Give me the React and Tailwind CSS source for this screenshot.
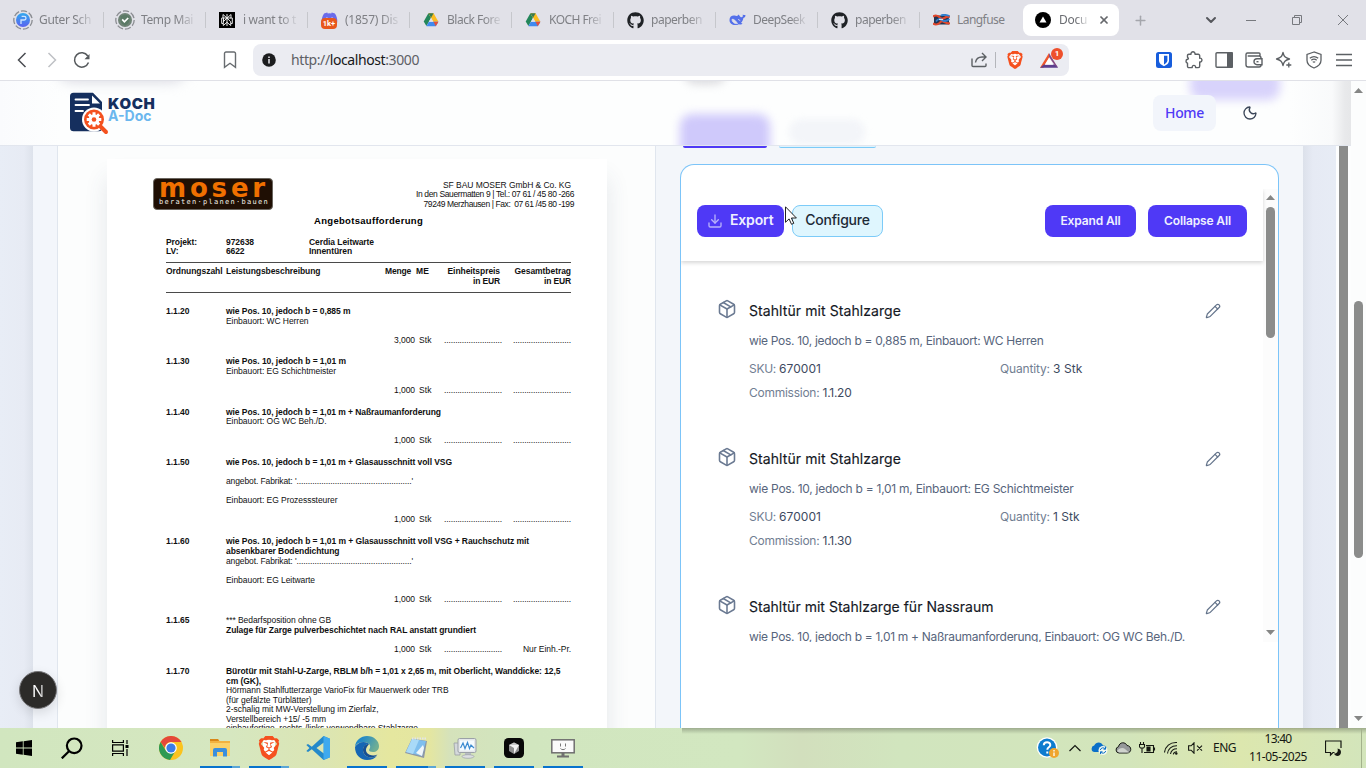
import React, { useLayoutEffect, useRef } from "react";
import { Moon, Package, Pencil, Download, ChevronDown, X, Plus } from "lucide-react";
import { FaGithub, FaDiscord } from "react-icons/fa";
import { SiBrave } from "react-icons/si";

/* Single-line text that spreads its letters over a given width. */
function Fit({ w, className = "", children }) {
  const ref = useRef(null);
  useLayoutEffect(() => {
    const el = ref.current;
    el.style.letterSpacing = "0px";
    const natural = el.getBoundingClientRect().width;
    const n = el.textContent.length;
    el.style.letterSpacing = (w - natural) / n + "px";
  }, [w, children]);
  return (
    <span ref={ref} className={"inline-block shrink-0 whitespace-pre " + className}>
      {children}
    </span>
  );
}

/* ---------- tab strip ---------- */

const DriveIcon = () => (
  <svg width="16" height="16" viewBox="0 0 16 16">
    <path d="M5.4 1.3 8.1 5.8 3.4 14 .7 9.5z" fill="#23865a" />
    <path d="M5.4 1.3h5.2L15.4 9.8H10.1z" fill="#fbbc1f" />
    <path d="M5.4 1.3h5.2L8.1 5.8z" fill="#3a7a50" />
    <path d="M3.4 14.2 5.9 9.8h9.5l-2.6 4.4z" fill="#3f8af0" />
    <path d="m12.8 14.2 2.6-4.4h-4.9z" fill="#e5503c" />
    <path d="M8.1 5.8 5.9 9.8h4.5z" fill="#e1e1e8" />
  </svg>
);

const DashedRing = ({ children }) => (
  <svg width="20" height="20" viewBox="0 0 20 20">
    <circle cx="10" cy="10" r="9.2" fill="none" stroke="#8b8d92" strokeWidth="1.3" strokeDasharray="6.2 2" />
    {children}
  </svg>
);

const ParkIcon = () => (
  <DashedRing>
    <defs>
      <linearGradient id="park" x1="0" y1="0" x2="0" y2="1">
        <stop offset="0" stopColor="#32a9ee" />
        <stop offset="1" stopColor="#5b63f0" />
      </linearGradient>
    </defs>
    <circle cx="10" cy="10" r="7" fill="url(#park)" />
    <path d="M8 14V10h3.2a1.8 1.8 0 1 0 0-3.6H8.6" fill="none" stroke="#cfe6ff" strokeWidth="1.3" />
  </DashedRing>
);

const TempMailIcon = () => (
  <DashedRing>
    <circle cx="10" cy="10" r="7" fill="#6f8376" />
    <path d="M5.5 6 10 4.5 14.5 6v4c0 3-2.5 4.8-4.5 5.7C8 14.800 5.500 13 5.500 10z" fill="#5b7a66" />
    <path d="m7.200 9.400 2.200 2.400 3.800-3.800" fill="none" stroke="#fff" strokeWidth="1.700" />
  </DashedRing>
);

const PerplexityIcon = () => (
  <svg width="16" height="16" viewBox="0 0 16 16">
    <rect width="16" height="16" fill="#000" />
    <g fill="none" stroke="#e9e9e9" strokeWidth="1">
      <path d="M8 2v12M4 2.500 8 6l4-3.500V6H4zM4.500 10V6H2.700v5.500h1.600V13.500L8 10.300l3.700 3.200v-2h1.600V6h-1.800" />
      <path d="M8 6 4.300 9.800v1.700M8 6l3.700 3.800v1.700" />
    </g>
  </svg>
);

const DiscordIcon = () => (
  <span className="flex size-4 flex-col items-center">
    <FaDiscord className="-mt-0.5 size-[17px] shrink-0 text-[#6a6bea]" />
    <span className="-mt-[9px] flex h-[11px] w-4 shrink-0 items-center justify-center rounded-[4px] bg-[#e8571c] font-['Roboto'] text-[7.5px] leading-none font-bold text-white">
      1k+
    </span>
  </span>
);

const WhaleIcon = () => (
  <svg width="17" height="14" viewBox="0 0 17 14">
    <path
      d="M.500 7C.500 3.800 3 2.300 5.500 2.600c1.200.200 2 .700 2.800.3.800-.5.200-1.200 1.200-1.200 1 .1.900 1.600 2 2.200.900.500 2 .300 2.300-.6.200-.8-.3-1.300.1-1.900.600.800 1.600.8 2.500.5.200 1.500-.5 2.600-2 3-.4 2.200-1.200 3.700-2.400 4.900.5.500 1.200.5 1.500 1-.700.900-2.500.900-3.600.4C5.800 13.200.500 11.800.500 7z"
      fill="#5470ea"
    />
    <path d="M3 6.300c2-.4 3.700 1.500 5.500 4.200C5.500 11.200 3 9 3 6.300zM9 6.300l2.300 1.400" fill="#e1e1e8" stroke="#e1e1e8" strokeWidth=".8" />
  </svg>
);

const LangfuseIcon = () => (
  <svg width="17" height="12" viewBox="0 0 17 12">
    <path d="M1 1.500h15v9H1z" fill="#25344f" />
    <path d="M0 2.500c4-2.500 6 0 8 2s5-3.500 9-1.500M0 9.500c4 2.500 6 0 8-2s5 3.500 9 1.500" fill="none" stroke="#e2482d" strokeWidth="2.200" />
    <path d="M8 1.500c3-1.500 6-.5 8.500.5M3 7.500c2-3 4-3 6-1.500s5 1 7.500-1" fill="none" stroke="#2f7fd0" strokeWidth="1.800" />
    <path d="M6 5.500h4" stroke="#d9dde5" strokeWidth="1.200" />
  </svg>
);

const Github = () => <FaGithub className="size-[17px] text-[#1f2226]" />;

const TABS = [
  { icon: ParkIcon, text: "Guter Sch", w: 52 },
  { icon: TempMailIcon, text: "Temp Mai", w: 52 },
  { icon: PerplexityIcon, text: "i want to t", w: 53 },
  { icon: DiscordIcon, text: "(1857) Dis", w: 53 },
  { icon: DriveIcon, text: "Black Fore", w: 53 },
  { icon: DriveIcon, text: "KOCH Frei", w: 52 },
  { icon: Github, text: "paperben", w: 51 },
  { icon: WhaleIcon, text: "DeepSeek", w: 52 },
  { icon: Github, text: "paperben", w: 51 },
  { icon: LangfuseIcon, text: "Langfuse", w: 47.5, full: true },
];

function TabStrip() {
  return (
    <div className="flex h-10 shrink-0 items-center bg-[#e1e1e8] pl-0.5 font-['Noto_Sans'] text-[12px] text-[#7f8085]">
      {TABS.map((t, i) => (
        <div key={i} className="flex h-10 w-[102px] shrink-0 items-center">
          <div className="ml-[11px] flex w-5 justify-center">
            <t.icon />
          </div>
          <div
            className={
              "ml-[6px] w-[54px] overflow-hidden whitespace-nowrap " +
              (t.full ? "" : "[mask-image:linear-gradient(to_right,#000_68%,transparent_104%)]")
            }
          >
            <Fit w={t.w}>{t.text}</Fit>
          </div>
          {!t.full && <div className="ml-auto h-4 w-px bg-[#c6c7cc]" />}
        </div>
      ))}
      <div className="ml-[1px] flex h-8 w-24 shrink-0 items-center rounded-[8px] bg-white">
        <svg className="ml-3" width="16" height="16" viewBox="0 0 16 16">
          <circle cx="8" cy="8" r="8" fill="#000" />
          <path d="M8 4.500 11.500 10.600h-7z" fill="#fff" />
        </svg>
        <div className="ml-2 w-[28px] overflow-hidden whitespace-nowrap text-[#6b6d72] [mask-image:linear-gradient(to_right,#000_60%,transparent_110%)]">
          <Fit w={28}>Docu</Fit>
        </div>
        <X className="ml-[11px] size-3 text-[#66686c]" strokeWidth={3.500} />
      </div>
      <Plus className="ml-[14px] size-[15px] text-[#a5a6ac]" strokeWidth={2.400} />
      <ChevronDown className="ml-[55px] size-[16px] text-[#55575c]" strokeWidth={3} />
      <svg className="ml-[27px]" width="10" height="10" viewBox="0 0 10 10">
        <path d="M0 5.500h10" stroke="#77797e" />
      </svg>
      <svg className="ml-[36px]" width="10" height="10" viewBox="0 0 10 10" fill="none" stroke="#77797e">
        <path d="M.500 2.500h7v7h-7zM2.500 2.500v-2h7v7h-2" />
      </svg>
      <svg className="ml-[36px]" width="10" height="10" viewBox="0 0 10 10" fill="none" stroke="#77797e">
        <path d="m0 0 10 10M10 0 0 10" />
      </svg>
    </div>
  );
}

/* ---------- address bar ---------- */

const Cell = ({ children }) => <div className="flex w-[30px] items-center justify-center">{children}</div>;

const BraveMark = ({ big }) => (
  <span className={"relative flex items-center justify-center " + (big ? "size-6" : "size-[18px]")}>
    <span className={"absolute bg-white " + (big ? "h-4 w-3" : "h-3 w-2")} />
    <SiBrave className={"relative text-[#f5501e] " + (big ? "size-6" : "size-[18px]")} />
  </span>
);

function AddressBar() {
  return (
    <div className="flex h-10 shrink-0 items-center bg-white text-[#55595c]">
      <svg className="ml-[16px]" width="12" height="16" viewBox="0 0 12 16" fill="none" stroke="#4a4d52" strokeWidth="1.500">
        <path d="M9.500 1 2.500 8l7 7" />
      </svg>
      <svg className="ml-[18px]" width="12" height="16" viewBox="0 0 12 16" fill="none" stroke="#bfc1c5" strokeWidth="1.500">
        <path d="m2.500 1 7 7-7 7" />
      </svg>
      <svg className="ml-[15px]" width="18" height="18" viewBox="0 0 18 18" fill="none" stroke="#55595c" strokeWidth="1.500">
        <path d="M15.500 11.500A7.200 7.200 0 1 1 14.800 5" />
        <path d="M16.500 3v5.200h-5z" fill="#55595c" stroke="none" />
      </svg>
      <svg className="ml-[132px]" width="14" height="18" viewBox="0 0 14 18" fill="none" stroke="#686c70" strokeWidth="1.400">
        <path d="M1.500 2.500a1.500 1.500 0 0 1 1.500-1.500h8a1.500 1.500 0 0 1 1.500 1.500v13.800L7 12.300l-5.500 4z" />
      </svg>
      <div className="ml-4 flex h-8 w-[816px] items-center rounded-[8px] bg-[#ebecf2]">
        <svg className="ml-[9px]" width="14" height="14" viewBox="0 0 14 14">
          <circle cx="7" cy="7" r="6.800" fill="#1c1d1f" />
          <path d="M7 6v4.500M7 3.400V5" stroke="#ebecf2" strokeWidth="1.500" />
        </svg>
        <span className="mb-0.5 ml-[15px] font-['Noto_Sans'] text-[14px] text-[#5d6065]">
          <Fit w={128}>
            http://<span className="text-[#17181a]">localhost</span>:3000
          </Fit>
        </span>
        <svg className="ml-[552px]" width="17" height="16" viewBox="0 0 17 16" fill="none" stroke="#5c6064" strokeWidth="1.400">
          <path d="M1 6.500V13.500a1 1 0 0 0 1 1h12a1 1 0 0 0 1-1V11.500" />
          <path d="M4.500 10.500c.5-3.500 3-5.500 6.500-5.500h3.500M11 1l4 4-4 4" />
        </svg>
        <div className="ml-[7px] h-4 w-px bg-[#b4b6bb]" />
        <div className="ml-[10px]">
          <BraveMark />
        </div>
        <div className="relative ml-[16px] h-[18px] w-[22px] pt-px">
          <svg width="18" height="16" viewBox="0 0 18 16">
            <path d="M9 1 0 15.800h3.500L9 6z" fill="#f0562c" />
            <path d="M0 15.800h18l-2.200-3.300H4z" fill="#5d3f8e" />
            <path d="M9 1 18 15.800l-3.700-3.300L9 5z" fill="#874a82" />
            <path d="M9 5.800 4.700 12.800h8.600z" fill="#fff" />
          </svg>
          <span className="absolute -top-[3px] left-[11px] flex size-3 items-center justify-center rounded-full bg-[#ee4f2b] font-['Roboto'] text-[8px] leading-none font-bold text-white">
            1
          </span>
        </div>
      </div>
      <div className="ml-[80px] flex items-center">
        <Cell>
          <svg width="16" height="16" viewBox="0 0 16 16">
            <rect width="16" height="16" rx="2.500" fill="#175ddc" />
            <path d="M3 2h10v6.500c0 3-3 4.800-5 5.700-2-.9-5-2.700-5-5.700z" fill="#fff" />
            <path d="M8 3.700h3.400v4.800c0 1.800-1.800 3-3.400 3.900z" fill="#175ddc" />
          </svg>
        </Cell>
        <Cell>
          <svg width="18" height="18" viewBox="0 0 18 18" fill="none" stroke="#5c6064" strokeWidth="1.400" strokeLinejoin="round">
            <path d="M2.500 4.500A1.300 1.300 0 0 1 3.800 3.200H6C5.500 0 10.500 0 10 3.200h3.200a1.500 1.500 0 0 1 1.500 1.500v2.500c3-.6 3 4.400 0 3.800V15a1.600 1.600 0 0 1-1.500 1.600h-2.600c.3-3-3.700-3-3.400 0H3.800a1.300 1.300 0 0 1-1.300-1.300v-3.100c-2-.5-2-3.500 0-3.900 1.200-.5 1.200-1.300 0-2z" />
          </svg>
        </Cell>
        <Cell>
          <svg width="18" height="16" viewBox="0 0 18 16">
            <rect x="1" y=".800" width="16" height="14.400" rx="1" fill="none" stroke="#5c6064" strokeWidth="1.400" />
            <path d="M12 0h5a1 1 0 0 1 1 1v14a1 1 0 0 1-1 1h-5z" fill="#5c6064" />
          </svg>
        </Cell>
        <Cell>
          <svg width="18" height="16" viewBox="0 0 18 16" fill="none" stroke="#5c6064" strokeWidth="1.400">
            <path d="M15 4V2a1 1 0 0 0-1-1H2.500A1.500 1.500 0 0 0 1 2.500v10.300A2.200 2.200 0 0 0 3.200 15H14a2 2 0 0 0 2-2V6a2 2 0 0 0-2-2H2.700" />
            <path d="M17 6.700h-5a3 3 0 0 0 0 6h5z" fill="#fff" />
            <path d="M11.500 9.700h2" />
          </svg>
        </Cell>
        <Cell>
          <svg width="18" height="18" viewBox="0 0 18 18" fill="none" stroke="#5c6064" strokeWidth="1.300" strokeLinejoin="round">
            <path d="M8 1.500c1 4 2 5.300 6.500 6.500-4.500 1.200-5.500 2.500-6.500 6.500-1-4-2-5.300-6.500-6.500C6 6.800 7 5.500 8 1.500z" />
            <path d="M13.800 11.500v5M11.300 14h5" />
          </svg>
        </Cell>
        <Cell>
          <svg width="16" height="18" viewBox="0 0 16 18" fill="none" stroke="#5c6064" strokeWidth="1.300">
            <path d="M8 1 1 3.500v5.700C1 13 4.200 15.600 8 17c3.800-1.400 7-4 7-7.800V3.500z" />
            <path d="M3.800 7.300c2.500-2 5.900-2 8.400 0M5.300 9.300c1.600-1.300 3.800-1.300 5.400 0M6.800 11.300c.8-.6 1.600-.6 2.400 0" />
          </svg>
        </Cell>
        <Cell>
          <svg width="16" height="14" viewBox="0 0 16 14" stroke="#5c6064" strokeWidth="1.400">
            <path d="M0 1.500h16M0 7h16M0 12.500h16" />
          </svg>
        </Cell>
      </div>
    </div>
  );
}

/* ---------- page header ---------- */

function PageHeader() {
  return (
    <div className="relative mt-px flex h-[65px] w-[1351px] shrink-0 overflow-hidden border-b border-[#e2e6ee] bg-[linear-gradient(to_right,#fafbfd,#fdfefe_60px,#fdfefe_1290px,#f9fafb_1332px,#e8e9eb_1345px,#e6e7e9)]">
      <div className="absolute -top-[28px] left-[58px] h-7 w-[128px] rounded-full bg-[#d3d4de] blur-[7px]" />
      <div className="absolute -top-[21px] left-[684px] h-6 w-[42px] rounded-full bg-[#d9d9dd] blur-[5px]" />
      <div className="absolute top-[33px] left-[680px] h-[56px] w-[90px] rounded-xl bg-[#cfc9fb] blur-[5px]" />
      <div className="absolute top-[38px] left-[789px] h-[26px] w-[76px] rounded-full bg-[#f3f5f9] blur-[3px]" />
      <div className="absolute -top-[14px] left-[1190px] h-[33px] w-[90px] rounded-xl bg-[#d8d3fb] blur-[5px]" />
      <div className="relative flex w-full items-start">
        <svg className="mt-[11px] ml-[69px]" width="40" height="44" viewBox="0 0 40 44">
          <path d="M4.500 0.800h19.500L33 10v27a3 3 0 0 1-3 2.200H4.500A3.500 3.500 0 0 1 1 36V4.300A3.500 3.500 0 0 1 4.500.800z" fill="#152f5e" />
          <path d="M23 3.500v8h8z" fill="#fff" />
          <path d="M6.500 7.500H19M6.500 13H20M6.500 19H14" stroke="#fff" strokeWidth="1.800" strokeLinecap="round" />
          <circle cx="25" cy="27.500" r="12" fill="#fff" />
          <path d="m31.500 34.500 5.500 5.500" stroke="#f4511f" strokeWidth="4" strokeLinecap="round" />
          <circle cx="25" cy="27.500" r="10" fill="#f4511f" />
          <g transform="translate(25 27.500)" fill="#fff">
            <circle r="5.300" />
            <path d="M-1.500-7.300h3v14.600h-3zM-7.300-1.500h14.600v3h-14.600z" />
            <path d="M-1.500-7.300h3v14.600h-3zM-7.300-1.500h14.600v3h-14.600z" transform="rotate(45)" />
            <circle r="2.300" fill="#f4511f" />
          </g>
        </svg>
        <div className="mt-[17px] -ml-px flex flex-col font-['Inter']">
          <Fit w={47.500} className="text-[15px] leading-[12px] font-black text-[#152f5e]">KOCH</Fit>
          <Fit w={47.500} className="text-[14px] leading-[12px] font-bold text-[#6bb7ee]">A-Doc</Fit>
        </div>
        <div className="mt-[14px] ml-auto flex h-9 w-[63px] items-center justify-center rounded-lg bg-[#f2f5fb] pb-0.5 font-['Noto_Sans'] text-[14px] font-medium text-[#4f39f6]">
          <Fit w={39}>Home</Fit>
        </div>
        <Moon className="mt-[24px] mr-[93px] ml-[26px] size-4 text-[#3b4658]" strokeWidth={2} />
      </div>
    </div>
  );
}

/* ---------- scanned document ---------- */

const DOTS = "..........................";
const FAB = "'...................................................'";

const Amount = ({ qty, last }) => (
  <div className="flex">
    <div className="w-[189px] text-right">
      <Fit w={21}>{qty}</Fit>
    </div>
    <div className="w-[29px] pl-1">
      <Fit w={12.500}>Stk</Fit>
    </div>
    <Fit w={58}>{DOTS}</Fit>
    <div className="w-[69px] text-right">{last ? <Fit w={48}>{last}</Fit> : <Fit w={58}>{DOTS}</Fit>}</div>
  </div>
);

const LINES = [
  { h: "h-[10px]", no: "1.1.20", b: "wie Pos. 10, jedoch b = 0,885 m", w: 124.500 },
  { h: "h-[19px]", t: "Einbauort: WC Herren", w: 82.500 },
  { h: "h-[21px]", qty: "3,000" },
  { h: "h-[10px]", no: "1.1.30", b: "wie Pos. 10, jedoch b = 1,01 m", w: 120 },
  { h: "h-[19px]", t: "Einbauort: EG Schichtmeister", w: 110 },
  { h: "h-[22px]", qty: "1,000" },
  { h: "h-[9px]", no: "1.1.40", b: "wie Pos. 10, jedoch b = 1,01 m + Naßraumanforderung", w: 215 },
  { h: "h-[19px]", t: "Einbauort: OG WC Beh./D.", w: 100.500 },
  { h: "h-[22px]", qty: "1,000" },
  { h: "h-[19px]", no: "1.1.50", b: "wie Pos. 10, jedoch b = 1,01 m + Glasausschnitt voll VSG", w: 226 },
  { h: "h-[19px]", t: "angebot. Fabrikat: " + FAB, w: 187 },
  { h: "h-[19px]", t: "Einbauort: EG Prozesssteurer", w: 111.500 },
  { h: "h-[22px]", qty: "1,000" },
  { h: "h-[10px]", no: "1.1.60", b: "wie Pos. 10, jedoch b = 1,01 m + Glasausschnitt voll VSG + Rauchschutz mit", w: 303 },
  { h: "h-[10px]", b: "absenkbarer Bodendichtung", w: 113.500 },
  { h: "h-[19px]", t: "angebot. Fabrikat: " + FAB, w: 187 },
  { h: "h-[19px]", t: "Einbauort: EG Leitwarte", w: 89 },
  { h: "h-[21px]", qty: "1,000" },
  { h: "h-[10px]", no: "1.1.65", t: "*** Bedarfsposition ohne GB", w: 105 },
  { h: "h-[19px]", b: "Zulage für Zarge pulverbeschichtet nach RAL anstatt grundiert", w: 250 },
  { h: "h-[22px]", qty: "1,000", last: "Nur Einh.-Pr." },
  { h: "h-[10px]", no: "1.1.70", b: "Bürotür mit Stahl-U-Zarge, RBLM b/h = 1,01 x 2,65 m, mit Oberlicht, Wanddicke: 12,5", w: 334.500 },
  { h: "h-[9px]", b: "cm (GK),", w: 35 },
  { h: "h-[10px]", t: "Hörmann Stahlfutterzarge VarioFix für Mauerwerk oder TRB", w: 222.500 },
  { h: "h-[9px]", t: "(für gefälzte Türblätter)", w: 85.500 },
  { h: "h-[10px]", t: "2-schalig mit MW-Verstellung im Zierfalz,", w: 152.500 },
  { h: "h-[9px]", t: "Verstellbereich +15/ -5 mm", w: 100 },
  { h: "h-[10px]", t: "einbaufertige, rechts-/links verwendbare Stahlzarge", w: 192 },
];

function Paper() {
  return (
    <div className="ml-[49px] flex h-[569px] w-[500px] shrink-0 flex-col overflow-hidden bg-white pr-[33px] pl-[46px] font-['Liberation_Sans'] text-[8.5px] leading-[10px] text-[#101010]">
      <div className="flex h-[51px] shrink-0 items-start justify-between pt-[19px]">
        <div className="flex h-8 w-[120px] shrink-0 flex-col items-start rounded-[4px] border border-[#6a6660] bg-[#1f0f04] pl-[5px]">
          <Fit w={110} className="h-[17px] font-['DejaVu_Sans'] text-[26px] leading-[19px] font-bold text-[#f07000]">moser</Fit>
          <Fit w={110} className="mt-[1px] font-['DejaVu_Sans_Mono'] text-[7px] leading-[10px] text-[#f3efe9]">beraten·planen·bauen</Fit>
        </div>
        <div className="mt-[2px] flex flex-col items-end">
          <Fit w={128} className="mr-[3px]">SF BAU MOSER GmbH &amp; Co. KG</Fit>
          <Fit w={158} className="-mt-px">In den Sauermatten 9 | Tel.: 07 61 / 45 80 -266</Fit>
          <Fit w={150.500}>79249 Merzhausen | Fax:  07 61 /45 80 -199</Fit>
        </div>
      </div>
      <div className="flex h-[27px] shrink-0 pt-[6px] pl-[161px]">
        <Fit w={109} className="text-[9.5px] font-bold text-black">Angebotsaufforderung</Fit>
      </div>
      <div className="ml-[13px] flex h-[25px] shrink-0 pt-px font-bold text-[#111]">
        <div className="flex w-[60px] flex-col items-start leading-[9px]">
          <Fit w={31}>Projekt:</Fit>
          <Fit w={12.500}>LV:</Fit>
        </div>
        <div className="flex w-[83px] flex-col items-start leading-[9px]">
          <Fit w={28}>972638</Fit>
          <Fit w={18.500}>6622</Fit>
        </div>
        <div className="flex flex-col items-start leading-[9px]">
          <Fit w={65}>Cerdia Leitwarte</Fit>
          <Fit w={43}>Innentüren</Fit>
        </div>
      </div>
      <div className="ml-[13px] flex h-[31px] w-[405px] shrink-0 border-y border-[#4a4a4a] pt-[3px] font-bold text-[#111]">
        <div className="w-[60px]">
          <Fit w={56.500}>Ordnungszahl</Fit>
        </div>
        <div className="w-[159px]">
          <Fit w={94.500}>Leistungsbeschreibung</Fit>
        </div>
        <div className="w-[31px]">
          <Fit w={26}>Menge</Fit>
        </div>
        <div className="w-[31px]">
          <Fit w={13}>ME</Fit>
        </div>
        <div className="flex w-[53px] flex-col items-end">
          <Fit w={52.500}>Einheitspreis</Fit>
          <Fit w={27}>in EUR</Fit>
        </div>
        <div className="flex w-[71px] flex-col items-end">
          <Fit w={56.500}>Gesamtbetrag</Fit>
          <Fit w={27}>in EUR</Fit>
        </div>
      </div>
      <div className="mt-[13px] ml-[13px] flex flex-col">
        {LINES.map((l, i) => (
          <div key={i} className={"flex shrink-0 " + l.h}>
            <div className="w-[60px] shrink-0 font-bold">{l.no && <Fit w={23.500}>{l.no}</Fit>}</div>
            {l.b && <Fit w={l.w} className="font-bold">{l.b}</Fit>}
            {l.t && <Fit w={l.w}>{l.t}</Fit>}
            {l.qty && <Amount qty={l.qty} last={l.last} />}
          </div>
        ))}
      </div>
    </div>
  );
}

/* ---------- extracted articles ---------- */

const ITEMS = [
  { title: "Stahltür mit Stahlzarge", tw: 152, desc: "wie Pos. 10, jedoch b = 0,885 m, Einbauort: WC Herren", dw: 294.500, sku: "670001", qty: "3 Stk", qw: 29.500, com: "1.1.20", cw: 29 },
  { title: "Stahltür mit Stahlzarge", tw: 152, desc: "wie Pos. 10, jedoch b = 1,01 m, Einbauort: EG Schichtmeister", dw: 324.500, sku: "670001", qty: "1 Stk", qw: 26.500, com: "1.1.30", cw: 29 },
  { title: "Stahltür mit Stahlzarge für Nassraum", tw: 244.500, desc: "wie Pos. 10, jedoch b = 1,01 m + Naßraumanforderung, Einbauort: OG WC Beh./D.", dw: 436 },
];

function Article({ it }) {
  return (
    <div className="flex h-[148px] shrink-0 items-start pl-[36px] text-[12px] leading-4 text-[#717e92]">
      <Package className="mt-[4px] size-5 shrink-0 text-[#6b7a92]" strokeWidth={1.900} />
      <div className="ml-[12px] w-[457px] shrink-0">
        <div className="flex h-[32px] items-center text-[14px] text-[#14181f] [-webkit-text-stroke:0.15px_#14181f]">
          <Fit w={it.tw} className="leading-5">{it.title}</Fit>
        </div>
        <div className="flex h-[30px] items-center text-[#57657c]">
          <Fit w={it.dw} className="mb-0.5">{it.desc}</Fit>
        </div>
        {it.sku && (
          <>
            <div className="flex h-[24px] items-center">
              <div className="flex w-[251px] shrink-0">
                <Fit w={30}>{"SKU: "}</Fit>
                <Fit w={42} className="text-[#3d4a60]">{it.sku}</Fit>
              </div>
              <Fit w={53}>{"Quantity: "}</Fit>
              <Fit w={it.qw} className="text-[#3d4a60]">{it.qty}</Fit>
            </div>
            <div className="flex h-[24px] items-center">
              <Fit w={73.500}>{"Commission: "}</Fit>
              <Fit w={it.cw} className="text-[#3d4a60]">{it.com}</Fit>
            </div>
          </>
        )}
      </div>
      <Pencil className="mt-[8px] -ml-px size-4 shrink-0 text-[#64748b]" strokeWidth={1.800} />
    </div>
  );
}

const ArrowUp = () => (
  <svg width="9" height="5" viewBox="0 0 9 5">
    <path d="M4.500 0 9 5H0z" fill="#858685" />
  </svg>
);
const ArrowDown = () => (
  <svg width="9" height="5" viewBox="0 0 9 5">
    <path d="M0 0h9L4.500 5z" fill="#858685" />
  </svg>
);

function ArticleCard() {
  return (
    <div className="mx-6 mt-[16px] h-[564px] rounded-t-[14px] border border-b-0 border-[#7cc4f8] bg-white">
      <div className="mt-6 flex h-[453px] overflow-hidden font-['Inter']">
        <div className="flex w-[582px] shrink-0 flex-col">
          <div className="relative flex h-[72px] shrink-0 items-start pt-4 pl-4 text-[14px] shadow-[0_2px_4px_rgba(0,0,0,0.16)]">
            <div className="flex h-8 w-[87px] items-center rounded-lg bg-[#4f39f6] pl-[10px] font-semibold text-[#eef0ff]">
              <Download className="size-4 text-[#b9b2fb]" strokeWidth={2} />
              <Fit w={43.500} className="mb-0.5 ml-[7px] leading-4">Export</Fit>
            </div>
            <div className="ml-2 flex h-8 w-[91px] items-center justify-center rounded-lg border border-[#7ccbf8] bg-[#dff6fe] font-medium text-[#1d2a36]">
              <Fit w={64.500} className="mb-0.5 leading-4">Configure</Fit>
            </div>
            <div className="ml-[162px] flex h-8 w-[91px] items-center justify-center rounded-lg bg-[#4f39f6] text-[12px] font-semibold text-[#eef0ff]">
              <Fit w={60}>Expand All</Fit>
            </div>
            <div className="ml-3 flex h-8 w-[99px] items-center justify-center rounded-lg bg-[#4f39f6] text-[12px] font-semibold text-[#eef0ff]">
              <Fit w={67}>Collapse All</Fit>
            </div>
            {/* mouse pointer */}
            <svg className="absolute top-[17px] left-[104px]" width="12" height="19" viewBox="0 0 12 19">
              <path d="M.500.800v15.500l3.600-3.400 2.400 5.400 2.300-1-2.400-5.300h5z" fill="#fff" stroke="#222" />
            </svg>
          </div>
          <div className="flex flex-col pt-[34px]">
            {ITEMS.map((it, i) => (
              <Article key={i} it={it} />
            ))}
          </div>
        </div>
        <div className="flex w-[15px] shrink-0 flex-col items-center bg-[#fcfcfc] pt-[6px] pb-[7px]">
          <ArrowUp />
          <div className="mt-[7px] h-[131px] w-[9px] rounded-full bg-[#8b8c8b]" />
          <div className="mt-auto">
            <ArrowDown />
          </div>
        </div>
      </div>
    </div>
  );
}

function PageBody() {
  return (
    <div className="flex h-[582px] w-[1351px] shrink-0 overflow-hidden bg-[#fdfefe]">
      <div className="h-full w-[33px] shrink-0 bg-[linear-gradient(to_right,#e8edf6,#e7ebf4_24px,#dde2eb)]" />
      <div className="h-full w-[24px] shrink-0 bg-[#f3f6fb]" />
      <div className="relative h-full w-[599px] shrink-0 overflow-hidden border-x border-[#e0e6ee] bg-[#fcfdfd] pt-[13px]">
        <div className="absolute top-[24px] left-[49px] h-[620px] w-[500px] shadow-[0_8px_22px_rgba(60,70,100,0.12)]" />
        <div className="relative">
          <Paper />
        </div>
      </div>
      <div className="h-full w-[647px] shrink-0 bg-[#f3f6fa]">
        <div className="flex h-[2px] pl-[27px]">
          <div className="h-[2px] w-[84px] rounded-b-[4px] bg-[#4f39f6]" />
          <div className="ml-[12px] h-[2px] w-[97px] rounded-b-[4px] border-b border-[#7ccbf8] bg-[#dff3fd]" />
        </div>
        <ArticleCard />
      </div>
      <div className="h-full w-[33px] shrink-0 bg-[linear-gradient(to_right,#dce1ea,#e6eaf4_10px,#e7ecf5)]" />
      <div className="ml-[3px] h-full w-[9px] bg-[#8b8c8b]" />
    </div>
  );
}

function Viewport() {
  return (
    <div className="relative flex h-[648px] shrink-0 bg-[#e0e1e7]">
      <div className="flex w-[1351px] flex-col">
        <PageHeader />
        <PageBody />
      </div>
      <div className="mt-px flex w-[15px] flex-col items-center bg-[#fcfdfd] pt-[7px] pb-[7px]">
        <ArrowUp />
        <div className="mt-[208px] h-[257px] w-[9px] rounded-full bg-[#8b8c8b]" />
        <div className="mt-auto">
          <ArrowDown />
        </div>
      </div>
      <div className="absolute top-[591px] left-[19px] flex size-[38px] items-center justify-center rounded-full border border-[#77777a] bg-[#2c2b29] pt-0.5 font-['Inter'] text-[16px] text-white shadow-[0_4px_12px_rgba(0,0,0,0.12)]">
        <span className="bg-[linear-gradient(to_right,#fff_55%,#aaa)] bg-clip-text text-transparent">N</span>
      </div>
    </div>
  );
}

/* ---------- taskbar ---------- */

const ChromeIcon = () => (
  <svg width="24" height="24" viewBox="0 0 24 24">
    <circle cx="12" cy="12" r="12" fill="#fbc31d" />
    <path d="M1.600 6A12 12 0 0 1 22.400 6H12a6 6 0 0 0-5.500 3.500L6 12z" fill="#e4483a" />
    <path d="M1.600 6A12 12 0 0 0 11 24l5.200-8.700A6 6 0 0 1 6.500 14z" fill="#2f9a52" />
    <circle cx="12" cy="12" r="5.800" fill="#fff" />
    <circle cx="12" cy="12" r="4.600" fill="#3c7ce6" />
  </svg>
);

const FolderIcon = () => (
  <svg width="22" height="20" viewBox="0 0 22 20">
    <path d="M1 1h8l1.500 2H21v15H1z" fill="#f2b240" />
    <path d="M1 1h8l1 2H1z" fill="#d98718" />
    <path d="M1 5h20v13H1z" fill="#fbd168" />
    <path d="M4 18.500V12a2 2 0 0 1 2-2h10a2 2 0 0 1 2 2v6.500h-4V14H8v4.500z" fill="#3b8fdc" />
  </svg>
);

const CodeIcon = () => (
  <svg width="24" height="24" viewBox="0 0 24 24">
    <path d="M17.500 0 5.800 10.800 2 8 .300 8.900 3.500 12 .300 15.100 2 16l3.800-2.800L17.500 24 24 21.300V2.700zM17.800 6.500v11L10.500 12z" fill="#2489ca" fillRule="evenodd" />
    <path d="M17.500 0 24 2.700v18.600L17.500 24z" fill="#3fa9ee" />
  </svg>
);

const EdgeIcon = () => (
  <svg width="24" height="24" viewBox="0 0 24 24">
    <defs>
      <linearGradient id="edge" x1="0" y1="0" x2="1" y2=".4">
        <stop offset=".3" stopColor="#2188c8" />
        <stop offset="1" stopColor="#6fae94" />
      </linearGradient>
    </defs>
    <path d="M0 11C.500 4 6 0 12 0c7 0 12 5 12 10 0 4-3 6-6 6-2.500 0-4-1-4-2 0-.8 1.200-1.300 1.200-3.500C15 7.500 12 6 8.500 6 4 6 1 8.500 0 11z" fill="url(#edge)" />
    <path d="M0 11C1.500 8 5 6 8.500 6c3 0 4.500 1 5.500 2-3 0-6 2.500-6 6 0 4.500 4 7.500 8 7.500 2.500 0 4.500-.8 6-2C20 22.500 16.500 24 12 24 5 24 0 18.500 0 11z" fill="#1666b4" />
    <path d="M14 8c-3.500 0-6 2.500-6 6 0 4.500 4 7.500 8 7.500 2.500 0 5-1 6.500-3-2 1-5 1.500-8 .2-3.500-1.500-4.500-5-2.500-8z" fill="#174f93" />
  </svg>
);

const NotepadIcon = () => (
  <svg width="24" height="22" viewBox="0 0 24 22">
    <path d="M8 1.500 23 4l-3 17L1 16z" fill="#8e98a6" />
    <path d="M8 2 22 4l-4 15L2 15z" fill="#7fbfee" />
    <path d="M8 2 15 3 9 17 2 15z" fill="#a9daf8" />
    <path d="m12 16 7-8 1 3-2 8z" fill="#f1f6fa" />
    <path d="M8 1.500h14" stroke="#e2e5e9" strokeWidth="1.800" strokeDasharray="1.500 1" />
  </svg>
);

const PerfIcon = () => (
  <svg width="24" height="22" viewBox="0 0 24 22">
    <path d="M1 6h6v12H2z" fill="#d4d8db" stroke="#999fa4" strokeWidth=".8" />
    <rect x="5" y="1.500" width="18" height="14" rx="1.500" fill="#e5e8eb" stroke="#9ba1a7" />
    <rect x="7" y="3.500" width="14" height="10" fill="#f6fbff" />
    <path d="M7.500 11 10 6l2 5.500 2.500-6 2 6L18 8l3 3" fill="none" stroke="#3c8bd0" strokeWidth="1.200" />
    <path d="M12 16h6v2.500h-6z" fill="#b8bdc2" />
    <ellipse cx="15" cy="19.500" rx="6" ry="1.800" fill="#dcdfe2" stroke="#9ba1a7" strokeWidth=".7" />
  </svg>
);

const CursorAppIcon = () => (
  <svg width="20" height="20" viewBox="0 0 20 20">
    <rect width="20" height="20" rx="4.500" fill="#080808" />
    <path d="M10 4.500 15 7v6l-5 3-5-3V7z" fill="#909090" />
    <path d="M5 7h10l-5 9V10z" fill="#f2f2f2" />
    <path d="M5 7l5-2.500L15 7z" fill="#c6c6c6" />
  </svg>
);

const ScreenIcon = () => (
  <svg width="24" height="19" viewBox="0 0 24 19">
    <rect x=".800" y=".800" width="22.400" height="13" fill="#fafafa" stroke="#6f6f6f" strokeWidth="1.500" />
    <path d="M9.500 4.500v3M14.500 4.500v3M9.500 9.500c1 1.500 4 1.500 5 0" stroke="#777" fill="none" />
    <path d="M10.500 14h3v2.500h4.500V18.500H6V16.500h4.500z" fill="#6f6f6f" />
  </svg>
);

const APPS = [
  { icon: ChromeIcon },
  { icon: FolderIcon, on: true, multi: true },
  { icon: () => <BraveMark big />, on: true, multi: true },
  { icon: CodeIcon },
  { icon: EdgeIcon, on: true },
  { icon: NotepadIcon, on: true, multi: true },
  { icon: PerfIcon, on: true },
  { icon: CursorAppIcon, on: true },
  { icon: ScreenIcon, on: true },
];

const TrayCell = ({ children }) => <div className="flex w-6 shrink-0 items-center justify-center">{children}</div>;

function Taskbar() {
  return (
    <div className="relative flex h-10 shrink-0 items-center bg-[linear-gradient(to_right,#d1e6bf,#d6e7c0_230px,#dbe5b4_320px,#e5e79f_390px,#e4e6a1_430px,#d5e2bb_450px,#d1e6bf_530px,#d2e7c0_740px,#d2dfbd_800px,#d1e5be_900px,#d3e5bb_1130px,#dce7ae_1240px,#d3e5bb)] font-['Noto_Sans'] text-[12px] text-[#151812]">
      <div className="absolute top-0 left-[682px] h-[6px] w-[684px] bg-linear-to-b from-black/25 to-transparent" />
      <div className="flex w-12 justify-center">
        <svg width="16" height="16" viewBox="0 0 16 16">
          <path d="M0 2.300 6.800 1.300v6.300H0zM7.600 1.200 16 0v7.600H7.600zM0 8.400h6.800v6.300L0 13.700zM7.600 8.400H16V16l-8.400-1.200z" fill="#000" />
        </svg>
      </div>
      <div className="flex w-12 justify-center">
        <svg width="22" height="22" viewBox="0 0 22 22" fill="none" stroke="#000" strokeWidth="2.200">
          <circle cx="13.200" cy="8.800" r="7.300" />
          <path d="M8 14.200.800 21.400" />
        </svg>
      </div>
      <div className="flex w-[50px] pl-[16px]">
        <svg width="17" height="16" viewBox="0 0 17 16" fill="none" stroke="#000" strokeWidth="1.200">
          <path d="M.600 0v2.500h10.800V0M.600 16v-2.500h10.800V16M.600 4.800h10.800v6.400H.600zM15 0v4M15 9v7" />
          <path d="M13.500 5h3v3h-3z" fill="#000" stroke="none" />
        </svg>
      </div>
      {APPS.map((a, i) => (
        <div key={i} className="relative flex h-10 w-[49px] shrink-0 items-center justify-center">
          <a.icon />
          {a.on && (
            <div className="absolute bottom-0 left-[5px] flex h-[2px] w-10">
              <div className="flex-1 bg-[#0873cd]" />
              {a.multi && <div className="w-2 bg-[#5ba6d6]" />}
            </div>
          )}
        </div>
      ))}
      <div className="ml-auto flex items-center pr-[14px]">
        <svg className="mr-[3px]" width="24" height="22" viewBox="0 0 24 22">
          <circle cx="11" cy="10.500" r="10.300" fill="#fff" />
          <circle cx="11" cy="10.500" r="9" fill="#0e7ccf" />
          <path d="M7.800 8.300c0-4 6.500-4 6.500-.3 0 2.400-3 2.200-3 4.700M11.300 14.500v2" fill="none" stroke="#fff" strokeWidth="2" />
          <circle cx="18" cy="16" r="5" fill="#efa52e" />
          <path d="M18 13v1.500M18 15.500v3.500" stroke="#fff" strokeWidth="1.300" />
        </svg>
        <TrayCell>
          <svg width="12" height="8" viewBox="0 0 12 8" fill="none" stroke="#151812" strokeWidth="1.200">
            <path d="m.500 7 5.500-5.500L11.500 7" />
          </svg>
        </TrayCell>
        <TrayCell>
          <svg width="17" height="13" viewBox="0 0 17 13">
            <path d="M3.500 10a3.300 3.300 0 0 1-.3-6.500C5-.5 10.500-.5 12 3.500c3 0 4 2 4 3.500s-1 3-2.500 3z" fill="#0a6fc8" />
            <circle cx="12" cy="8.500" r="4.500" fill="#f3f8ee" />
            <path d="M9.300 8a2.800 2.800 0 0 1 5-1M14.700 9a2.800 2.800 0 0 1-5 1M14.500 5v2.200h-2M9.500 12V9.800h2" fill="none" stroke="#0a6fc8" />
          </svg>
        </TrayCell>
        <TrayCell>
          <svg width="17" height="12" viewBox="0 0 17 12">
            <path d="M4 11a3.200 3.200 0 0 1-.5-6.300C4.500-.3 10.500-.3 12 3.500c5 .3 5 7.500 0 7.500z" fill="#96999a" stroke="#151812" />
            <path d="M2 9c2-3 6-4 8-2l4 3.500H4z" fill="#cfd3cd" />
          </svg>
        </TrayCell>
        <TrayCell>
          <svg width="17" height="12" viewBox="0 0 17 12" fill="none" stroke="#151812" strokeWidth="1.100">
            <path d="M5 10.500h9.500v-7H7M15.500 5.500v3" />
            <path d="M8 5h3v4H8z" fill="#151812" />
            <path d="M1.500 0v2.500M4.500 0v2.500M.500 2.500h5v2.300l-1 1.200h-3l-1-1.200zM3 6v5" />
          </svg>
        </TrayCell>
        <TrayCell>
          <svg width="14" height="14" viewBox="0 0 14 14" fill="none" stroke="#151812" strokeWidth="1.100">
            <path d="M.500 11.500C1 5.500 6 1 13 1.500M3.500 12.500C4 8 7.500 4.500 13 4.700M6.500 13c.5-3 3-5.200 6.500-5.200M9.300 13.300c.3-1.500 1.600-2.500 3.700-2.500" />
            <circle cx="12.300" cy="12.500" r="1.200" fill="#151812" stroke="none" />
          </svg>
        </TrayCell>
        <TrayCell>
          <svg width="15" height="12" viewBox="0 0 15 12" fill="none" stroke="#151812" strokeWidth="1.100">
            <path d="M.600 3.800h2.500L6 .800v10.400L3.100 8.200H.600zM9 3.700l5 5M14 3.700l-5 5" />
          </svg>
        </TrayCell>
        <div className="flex w-[35px] shrink-0 justify-center">
          <Fit w={23}>ENG</Fit>
        </div>
        <div className="flex w-[72px] shrink-0 flex-col items-center leading-[18px]">
          <Fit w={27}>13:40</Fit>
          <Fit w={58}>11-05-2025</Fit>
        </div>
        <div className="flex w-[38px] shrink-0 justify-center">
          <svg width="17" height="17" viewBox="0 0 17 17" fill="none" stroke="#151812" strokeWidth="1.200">
            <path d="M9.500 12.500H8L5.500 15v-2.500h-5V1h15.500v7" />
            <path d="M12.500 8.500c1 3-.5 5-3.500 5 1 3.500 7 3.500 7-1.500 0-2-1.500-3.200-3.500-3.500z" fill="#151812" stroke="none" />
          </svg>
        </div>
      </div>
      <div className="absolute top-0 left-[1361px] h-10 w-px bg-[#a3b28c]" />
    </div>
  );
}

export default function App() {
  return (
    <div className="flex h-[768px] w-[1366px] flex-col overflow-hidden bg-white">
      <TabStrip />
      <AddressBar />
      <Viewport />
      <Taskbar />
    </div>
  );
}
